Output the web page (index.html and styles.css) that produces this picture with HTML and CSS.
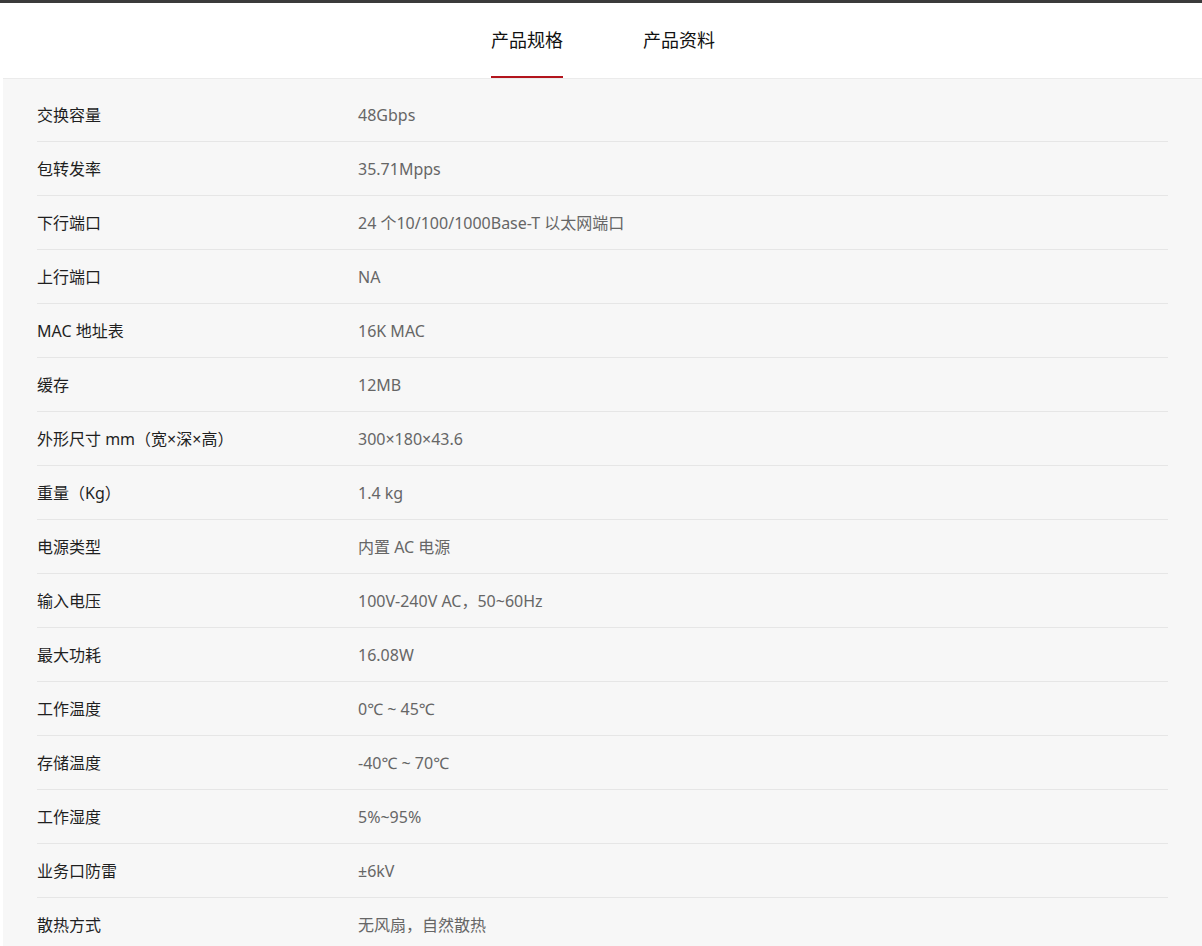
FILE: index.html
```html
<!DOCTYPE html>
<html lang="zh-CN">
<head>
<meta charset="utf-8">
<title>产品规格</title>
<link rel="stylesheet" href="styles.css">
</head>
<body>
<div class="topbar"></div>
<nav class="tabs">
  <a class="tab active">产品规格</a>
  <a class="tab">产品资料</a>
</nav>
<section class="panel">
  <div class="row"><div class="label">交换容量</div><div class="value">48Gbps</div></div>
  <div class="row"><div class="label">包转发率</div><div class="value">35.71Mpps</div></div>
  <div class="row"><div class="label">下行端口</div><div class="value">24 个10/100/1000Base-T 以太网端口</div></div>
  <div class="row"><div class="label">上行端口</div><div class="value">NA</div></div>
  <div class="row"><div class="label">MAC 地址表</div><div class="value">16K MAC</div></div>
  <div class="row"><div class="label">缓存</div><div class="value">12MB</div></div>
  <div class="row"><div class="label">外形尺寸 mm（宽×深×高）</div><div class="value">300×180×43.6</div></div>
  <div class="row"><div class="label">重量（Kg）</div><div class="value">1.4 kg</div></div>
  <div class="row"><div class="label">电源类型</div><div class="value">内置 AC 电源</div></div>
  <div class="row"><div class="label">输入电压</div><div class="value">100V-240V AC，50~60Hz</div></div>
  <div class="row"><div class="label">最大功耗</div><div class="value">16.08W</div></div>
  <div class="row"><div class="label">工作温度</div><div class="value">0℃ ~ 45℃</div></div>
  <div class="row"><div class="label">存储温度</div><div class="value">-40℃ ~ 70℃</div></div>
  <div class="row"><div class="label">工作湿度</div><div class="value">5%~95%</div></div>
  <div class="row"><div class="label">业务口防雷</div><div class="value">±6kV</div></div>
  <div class="row"><div class="label">散热方式</div><div class="value">无风扇，自然散热</div></div>
</section>
</body>
</html>
```
FILE: styles.css
```css
html, body {
  margin: 0;
  padding: 0;
  background: #ffffff;
  font-family: "Noto Sans", "Noto Sans CJK SC", sans-serif;
}
.topbar {
  height: 3px;
  background: #3b3b3b;
}
.tabs {
  height: 75px;
  display: flex;
  justify-content: center;
  gap: 80px;
  background: #ffffff;
  padding-left: 4px;
}
.tab {
  display: flex;
  align-items: center;
  box-sizing: border-box;
  height: 75px;
  padding-bottom: 0;
  border-bottom: 2px solid transparent;
  font-size: 18px;
  font-weight: 400;
  line-height: 1;
  color: #111111;
}
.tab.active {
  border-bottom-color: #b3151d;
}
.panel {
  margin-left: 3px;
  background: #f7f7f7;
  border-top: 1px solid #ebebeb;
  padding: 9px 34px 0 34px;
}
.row {
  display: flex;
  align-items: center;
  box-sizing: border-box;
  height: 54px;
  padding-top: 2px;
  border-bottom: 1px solid #e6e6e6;
  font-size: 16px;
  line-height: 1.2;
}
.label {
  width: 321px;
  color: #1f1f1f;
}
.value {
  color: #666666;
}
```
